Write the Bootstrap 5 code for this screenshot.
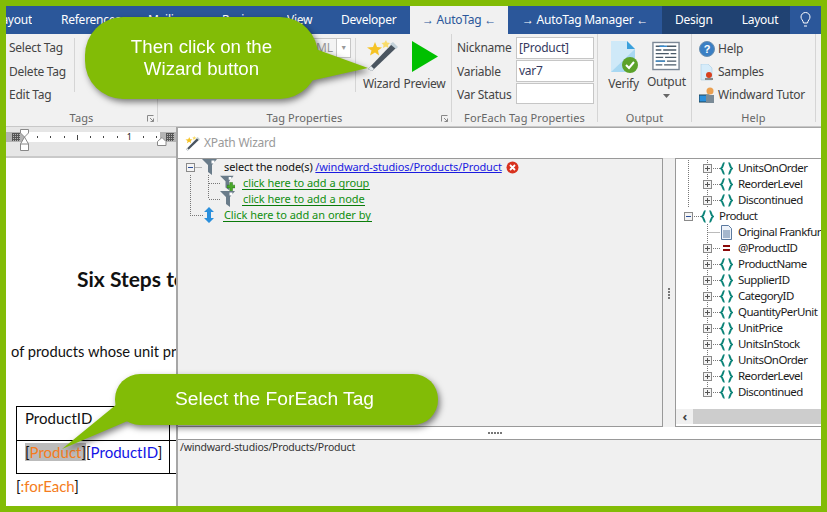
<!doctype html>
<html lang="en"><head><meta charset="utf-8"><title>XPath Wizard</title>
<link href="https://cdn.jsdelivr.net/npm/bootstrap@5.3.0/dist/css/bootstrap.min.css" rel="stylesheet">
<style>
html,body{margin:0;height:512px;overflow:hidden;background:#82bc06}
body{font:12px/16px "Noto Sans",sans-serif;color:#444;letter-spacing:-.25px}
.frm{width:815px;height:500px;margin:6px;background:#fff;position:relative;overflow:hidden}
.tabsbar{height:28px;background:#2b579a;color:#fff;font-size:12px;line-height:28px}
.tabsbar>div{white-space:nowrap;overflow:hidden;flex:none}
.t1{width:26px;display:flex;justify-content:flex-end}
.t2{margin-left:29px;width:87px}.t3{width:74px}.t4{width:65px}.t5{width:54px}.t6{width:69px}
.t7{width:98px;background:#f1f1f1;color:#2b579a;text-align:center}
.t8{width:154px;text-align:center}
.t9{width:128px;background:#204272;display:flex;padding-left:13px;gap:29px}
.t10{width:31px;text-align:center}
.rib{height:93px;background:#f1f1f1;border-bottom:1px solid #c8c8c8}
.grp{border-right:1px solid #d5d5d5;height:88px;flex:none;position:relative;display:flex;flex-direction:column}
.g1{width:152px}.g2{width:294px}.g3{width:146px}.g4{width:94px}.g5{width:124px}
.gbody{flex:1;display:flex;min-height:0}
.glab{height:18px;line-height:28px;text-align:center;font-size:11px;color:#666;letter-spacing:.1px}
.laun{position:absolute;right:3px;bottom:0}
.stk{display:flex;flex-direction:column;gap:7.500px}
.stk div{height:16px;white-space:nowrap}
.tagcol{width:69px;padding-left:3px;margin-top:4px;padding-top:2px;height:54px;border-right:1px solid #d5d5d5}
.sp197{width:197px;flex:none;display:flex;padding-right:4px}
.combo{margin:4px 0 0 auto;width:42px;height:20px;border:1px solid #c6c6c6;background:#f4f4f4;display:flex;justify-content:space-between;color:#999;line-height:18px;padding-left:6px}
.combo i{width:14px;border-left:1px solid #c6c6c6;background:#fff;font-style:normal;font-size:7px;text-align:center}
.tpl{width:52px;border-left:1px solid #d5d5d5;height:54px;margin-top:4px;text-align:center;flex:none;padding-top:2px}
.tpr{width:45px;margin-left:-5px;padding-top:7px;text-align:center;flex:none}
.tpr svg{margin-bottom:4px}
.fl{width:64px;padding:6px 0 0 5px;display:flex;flex-direction:column;gap:7.500px;flex:none}
.fl div{height:16px;white-space:nowrap}
.ff{width:78px;display:flex;flex-direction:column;gap:1px;padding-top:3px;flex:none}
.ff div{height:22px;background:#fff;border:1px solid #c6c6c6;line-height:20px;padding-left:2px;color:#353a60}
.ob{width:51px;flex:none;text-align:center;padding-top:7px}
.ob svg{display:block;margin:0 auto 3px}
.ob2{width:38px;margin-left:-2px}
.hp{padding:7px 0 0 7px;display:flex;flex-direction:column;gap:7px}
.hp div{height:16px;display:flex;align-items:center;gap:3px;white-space:nowrap}
.ruler{height:31px;background:#e6e6e6;border-bottom:2px solid #c9c9c9;position:relative}
.rwrap{padding-top:5px;height:15px;display:flex}
.rl{width:19px;height:10px;background:#b4b4b4;padding:1px 5px 1px 6px}
.rm{width:135px;height:10px;background:#fff;font-size:9px;line-height:10px;color:#222;display:flex;padding-left:12px;align-items:center}
.rm span{width:13.250px;flex:none}
.rm span::before{content:"";display:block;width:1px;height:2px;background:#444}
.rm .tkl::before{height:5px}
.rm .tkn::before{display:none}
.rm .tkn{margin-left:-3px;margin-right:3px}
.rr{flex:1;height:10px;background:#b4b4b4;padding:1px 0 1px 6px}
.hatch{display:block;width:8px;height:8px;background:repeating-linear-gradient(90deg,#555 0 1px,transparent 1px 2px),repeating-linear-gradient(#555 0 1px,transparent 1px 2px)}
.mk1{position:absolute;left:14px;top:2px}.mk2{position:absolute;left:151px;top:10px}
.page{height:348px;font-family:Lato,sans-serif;font-size:15px;color:#111;overflow:hidden;letter-spacing:0}
.hd{font-size:21px;font-weight:700;padding:109px 0 0 71px;line-height:24px;white-space:nowrap}
.ln{padding:50px 0 0 5px;white-space:nowrap;line-height:20px;font-size:14.700px}
.tbl{margin:45px 0 0 10px;width:160px;border-top:1px solid #000;border-left:1px solid #000}
.rwx{border-bottom:1px solid #000;height:34px;line-height:20px}
.rwx2{height:33px;border-bottom:1px solid #000;line-height:20px}
.clx{width:153px;height:100%;border-right:1px solid #000;padding:1px 8px;white-space:nowrap}
.org{color:#f47c20}.blu{color:#1414e6}.sel{background:#bbb}
.endt{padding:2px 0 0 10px;line-height:20px}
.wiz{position:absolute;left:170px;top:121px;width:645px;height:379px;background:#fff;border:1px solid #a6a6a6;border-left-width:2px;border-right:0;border-bottom:0}
.wt{height:30px;display:flex;align-items:center;gap:4px;padding-left:7px;color:#9a9a9a;font-size:12px}
.wmain{height:269px;display:flex}
.lp{width:485px;flex:none;background:#f0f0f0;border:1px solid #999;border-left:0;font-size:11px;color:#111;letter-spacing:-.12px}
.spl{width:12px;flex:none;background:#f0f0f0;border-top:1px solid #e0e0e0;display:flex;flex-direction:column;align-items:center;justify-content:center;gap:1px}
.spl i{width:2px;height:2px;background:#777;display:block}
.rp{flex:1;background:#fff;border:1px solid #999;border-right:0;display:flex;flex-direction:column;overflow:hidden;color:#1c1c1c;font-size:11.500px;letter-spacing:-.55px;min-width:0}
.ttree{flex:1;padding-top:1px}
.row16{height:16px;display:flex;align-items:center;white-space:nowrap}
.row16>*{flex:none}
.vg{height:16px;background:repeating-linear-gradient(#777 0 1px,transparent 1px 2px) left/1px 100% no-repeat}
.hg{height:16px;background:linear-gradient(90deg,#777 50%,transparent 50%) center/2px 1px repeat-x}
.vmid{height:16px;width:9px;display:flex;align-items:center;background:repeating-linear-gradient(#777 0 1px,transparent 1px 2px) center/1px 100% no-repeat}
.vtop{background:repeating-linear-gradient(#777 0 1px,transparent 1px 2px) center top/1px 8px no-repeat}
.w12{width:12px}.w15{width:15px}.w8{width:8px}.w7{width:7px}.w13{width:13px}.w31{width:31px}.w18{width:18px}.w9{width:9px}
.hl{background:linear-gradient(90deg,#777 50%,transparent 50%) center/2px 1px repeat-x,repeating-linear-gradient(#777 0 1px,transparent 1px 2px) left/1px 100% no-repeat;height:16px}
.hlend{background:linear-gradient(90deg,#777 50%,transparent 50%) center/2px 1px repeat-x,repeating-linear-gradient(#777 0 1px,transparent 1px 2px) left top/1px 8px no-repeat;height:16px}
.hl12{width:12px}.hl14{width:14px}.hl13{width:13px}
.ic{margin-right:5px}
.sb{height:15px;display:flex;flex:none;background:#cdcdcd;margin-bottom:2px}
.sb b{width:17px;background:#f0f0f0;color:#444;text-align:center;line-height:14px;font-size:13px}
.grn{color:#118f11;border-bottom:1px solid #0a7a0a;line-height:13px;padding:0 1px;word-spacing:.3px}
.bl{color:#1a1ae0;text-decoration:underline}
.strip{height:13px;background:#fff;border-bottom:1px solid #999;display:flex;justify-content:center;align-items:center;gap:1px;padding-right:10px}
.strip i{width:2px;height:2px;background:#777;display:block}
.wb{height:66px;background:#f0f0f0;font-size:10.500px;color:#333;padding-left:2px;line-height:14px;letter-spacing:-.2px}
.addw{display:flex;align-items:flex-end;width:15px}.addp{margin-left:-7px}
.call{position:absolute;background:#82bc06;color:#fff;font:18.700px/22px "Liberation Sans",sans-serif;letter-spacing:0;text-align:center;filter:drop-shadow(2px 3px 3px rgba(0,0,0,.5))}
.c1{left:79px;top:11px;width:233px;height:82px;border-radius:38px;display:flex;align-items:center;justify-content:center}
.c2{left:109px;top:368px;width:323px;height:51px;border-radius:25px;line-height:50px;font-size:19.200px;padding-right:4px}
.tail{position:absolute;overflow:visible}
.tl1{left:225px;top:0}.tl2{left:-70px;top:0}
</style></head><body>
<svg width="0" height="0" class="d-block position-absolute"><defs>
<symbol id="plus" viewBox="0 0 9 9"><rect x=".5" y=".5" width="8" height="8" fill="#f4f4f4" stroke="#8a8a8a"/><path d="M2 4.500h5M4.500 2v5" stroke="#555"/></symbol>
<symbol id="minus" viewBox="0 0 9 9"><rect x=".5" y=".5" width="8" height="8" fill="#f4f4f4" stroke="#8a8a8a"/><path d="M2 4.500h5" stroke="#2b4f9a"/></symbol>
<symbol id="brace" viewBox="0 0 13 13"><path d="M4.500 1C2.500 1 3.500 5 1 6.500 3.500 8 2.500 12 4.500 12M8.500 1c2 0 1 4 3.500 5.500C9.500 8 10.500 12 8.500 12" fill="none" stroke="#0d8479" stroke-width="2"/></symbol>
<symbol id="funnel" viewBox="0 0 15 16"><path d="M0 0h15L10 6v10L6 13V6z" fill="#6a7c8a"/><path d="M9.500 1.500h3v3h-3z" fill="#fff"/></symbol>
<symbol id="wand" viewBox="0 0 32 32"><path d="M2 29L6 31 30 8 26 4z" fill="#4a5560"/><path d="M2 29l3-3 3 3-2 2z" fill="#e8eef2"/><path d="M24 4l6 5 2-2-5-5z" fill="#c4d2da"/><path d="M9 2l2 5 5 .5-4 3 1 5-4-3-5 3 1.500-5L1 7.500 7 7z" fill="#f6c325"/><path d="M20 0l1 2.500 3 .5-2 2 .5 3-2.500-1.500L17 8l.5-3-2-2 3-.5z" fill="#f9dc6a"/></symbol>
<symbol id="laun" viewBox="0 0 7 7"><path d="M.5 6.500v-6h6M3 3l3.500 3.500M6.500 3.500v3h-3" fill="none" stroke="#888"/></symbol>
</defs></svg>
<div class="frm">
<div class="tabsbar d-flex">
<div class="t1"><span>Layout</span></div><div class="t2">References</div><div class="t3">Mailings</div><div class="t4">Review</div><div class="t5">View</div><div class="t6">Developer</div>
<div class="t7">→ AutoTag ←</div><div class="t8">→ AutoTag Manager ←</div><div class="t9"><span>Design</span><span>Layout</span></div>
<div class="t10"><svg width="11" height="17" viewBox="0 0 11 17"><path d="M3.500 11C3 8 1 7.500 1 5a4.500 4.500 0 0 1 9 0c0 2.500-2 3-2.500 6zM4 14h3" fill="none" stroke="#fff"/></svg></div>
</div>
<div class="rib d-flex">
<div class="grp g1"><div class="gbody"><div class="stk tagcol"><div>Select Tag</div><div>Delete Tag</div><div>Edit Tag</div></div></div><div class="glab">Tags</div>
<svg class="laun" width="7" height="7"><use href="#laun"/></svg></div>
<div class="grp g2"><div class="gbody"><div class="sp197"><div class="combo"><span>ML</span><i>▼</i></div></div><div class="tpl"><svg width="32" height="32"><use href="#wand"/></svg><div class="pt-1">Wizard</div></div><div class="tpr"><svg width="26" height="31" viewBox="0 0 26 31" class="d-block mx-auto"><path d="M0 0l26 15.500L0 31z" fill="#00c000"/></svg><div>Preview</div></div></div><div class="glab">Tag Properties</div>
<svg class="laun" width="7" height="7"><use href="#laun"/></svg></div>
<div class="grp g3"><div class="gbody"><div class="fl"><div>Nickname</div><div>Variable</div><div>Var Status</div></div><div class="ff"><div>[Product]</div><div>var7</div><div></div></div></div><div class="glab">ForEach Tag Properties</div></div>
<div class="grp g4"><div class="gbody"><div class="ob"><svg width="30" height="32" viewBox="0 0 30 32"><path d="M2 0h16l8 8v23H2z" fill="#cfe9f8"/><path d="M18 0l8 8h-8z" fill="#3aa0dc"/><path d="M2 31L26 8v23z" fill="#a8d8f2"/><circle cx="21" cy="24" r="8" fill="#5ca22a"/><path d="M17 24l3 3 5-6" fill="none" stroke="#fff" stroke-width="2"/></svg><div>Verify</div></div><div class="ob ob2"><svg width="28" height="30" viewBox="0 0 30 31"><rect x="1" y="1" width="28" height="29" fill="#fff" stroke="#7c8896" stroke-width="1.500"/><path d="M4 5h9M16 5h10M4 9h6M12 9h14M4 13h14M20 13h6M4 17h8M14 17h12M4 21h10M16 21h10M4 25h7M13 25h13" stroke="#4a5a68" stroke-width="1.500"/><path d="M8 5h8M4 21h10" stroke="#3a8dd0" stroke-width="1.500"/></svg><div>Output</div><svg width="7" height="4" class="mt-1"><path d="M0 0h7L3.500 4z" fill="#666"/></svg></div></div><div class="glab">Output</div></div>
<div class="grp g5"><div class="gbody"><div class="hp">
<div><svg width="16" height="16" viewBox="0 0 16 16"><circle cx="8" cy="8" r="7.500" fill="#3a7fc4" stroke="#6a8fb0"/><text x="8" y="12" text-anchor="middle" font-size="11" font-weight="700" fill="#fff" font-family="Liberation Sans">?</text></svg>Help</div>
<div><svg width="16" height="17" viewBox="0 0 16 17"><path d="M2 0h7l4 4v12H2z" fill="#d6ecfa" stroke="#9ec4dc" stroke-width=".5"/><circle cx="10" cy="11" r="3" fill="#d8401e"/><rect x="6" y="14" width="8" height="2" fill="#888"/></svg>Samples</div>
<div><svg width="16" height="17" viewBox="0 0 16 17"><rect y="8" width="10" height="7" fill="#2a8fdc" stroke="#245"/><circle cx="11" cy="4" r="3.500" fill="#eba050"/><path d="M7 8h8v8H7z" fill="#7a8a96"/></svg>Windward Tutor</div>
</div></div><div class="glab">Help</div></div>
</div>
<div class="ruler"><div class="rwrap"><div class="rl"><i class="hatch"></i></div><div class="rm"><span></span><span></span><span></span><span class="tkl"></span><span></span><span></span><span></span><span class="tkn">1</span><span></span><span></span></div><div class="rr"><i class="hatch"></i></div></div>
<svg class="mk1" width="9" height="22" viewBox="0 0 9 22"><path d="M.5.500h8V4L4.500 8 .5 4zM.5 15l4-7 4 7v6.500h-8z" fill="#fff" stroke="#888"/><path d="M.5 15h8" stroke="#888"/></svg>
<svg class="mk2" width="10" height="9" viewBox="0 0 10 9"><path d="M.5 4.500L5 .5l4 4V8.500H.5z" fill="#fff" stroke="#888"/></svg>
</div>
<div class="page">
<div class="hd">Six Steps to Generate a Report</div>
<div class="ln">of products whose unit price is above average</div>
<div class="tbl"><div class="rwx"><div class="clx">ProductID</div></div><div class="rwx2"><div class="clx"><span class="sel">[<span class="org">Product</span>]</span>[<span class="blu">ProductID</span>]</div></div></div>
<div class="endt">[<span class="org">:forEach</span>]</div>
</div>
<div class="wiz">
<div class="wt"><svg width="15" height="15"><use href="#wand"/></svg>XPath Wizard</div>
<div class="wmain">
<div class="lp">
<div class="row16"><span class="w8"></span><svg width="9" height="9"><use href="#minus"/></svg><span class="hg w7"></span><svg width="15" height="16"><use href="#funnel"/></svg><span class="w7"></span><span>select the node(s)</span>&nbsp;<span class="bl">/windward-studios/Products/Product</span><svg width="13" height="13" viewBox="0 0 13 13" class="ms-1"><circle cx="6.500" cy="6.500" r="6" fill="#d8321e"/><path d="M4 4l5 5M9 4l-5 5" stroke="#fff" stroke-width="1.800"/></svg></div>
<div class="row16"><span class="w12"></span><span class="vg w18"></span><span class="hl hl12"></span><span class="addw"><svg width="15" height="16"><use href="#funnel"/></svg><svg width="9" height="9" viewBox="0 0 9 9" class="addp"><path d="M3 0h3v3h3v3H6v3H3V6H0V3h3z" fill="#4aa82a" stroke="#1d6a10" stroke-width=".5"/></svg></span><span class="w7"></span><span class="grn">click here to add a group</span></div>
<div class="row16"><span class="w12"></span><span class="vg w18"></span><span class="hlend hl12"></span><svg width="15" height="16"><use href="#funnel"/></svg><span class="w7"></span><span class="grn">click here to add a node</span></div>
<div class="row16"><span class="w12"></span><span class="hlend hl14"></span><svg width="10" height="16" viewBox="0 0 10 16"><path d="M5 0l5 5H7v6h3l-5 5-5-5h3V5H0z" fill="#2a8fdc"/></svg><span class="w9"></span><span class="grn">Click here to add an order by</span></div>
</div>
<div class="spl"><i></i><i></i><i></i><i></i></div>
<div class="rp"><div class="ttree" id="tree"></div><div class="sb"><b>‹</b></div></div>
</div>
<div class="strip"><i></i><i></i><i></i><i></i><i></i></div>
<div class="wb">/windward-studios/Products/Product</div>
</div>
<div class="call c1">Then click on the<br>Wizard button
<svg class="tail tl1" width="60" height="70" viewBox="0 0 60 70"><path d="M0 30L58 51 0 64z" fill="#82bc06"/></svg></div>
<div class="call c2">Select the ForEach Tag
<svg class="tail tl2" width="90" height="80" viewBox="0 0 90 80"><path d="M72 30L17 75 85 46z" fill="#82bc06"/></svg></div>
</div>
<script>
const rows=[[2,'b','UnitsOnOrder'],[2,'b','ReorderLevel'],[2,'b','Discontinued'],[1,'b','Product'],[0,'d','Original Frankfurt'],[0,'e','@ProductID'],
[0,'b','ProductName'],[0,'b','SupplierID'],[0,'b','CategoryID'],[0,'b','QuantityPerUnit'],[0,'b','UnitPrice'],[0,'b','UnitsInStock'],[0,'b','UnitsOnOrder'],[0,'b','ReorderLevel'],[0,'b','Discontinued']];
const brace='<svg width="13" height="13" class="ic"><use href="#brace"/></svg>';
const plus=(end)=>`<span class="vmid${end?' vtop':''}"><svg width="9" height="9" class="d-block"><use href="#plus"/></svg></span><span class="hg w8"></span>`;
document.getElementById('tree').innerHTML=rows.map(([l,k,t],i)=>{
 if(k==='d')return `<div class="row16"><span class="w31"></span><span class="hl hl13"></span><svg width="13" height="15" viewBox="0 0 13 15" class="ic"><path d="M1.500.5h7l3 3v11h-10zM3 6h7M3 8h7M3 10h7M3 12h7" fill="#eef3fa" stroke="#5c7aa0"/></svg><span>${t}</span></div>`;
 if(l===1)return `<div class="row16"><span class="w8"></span><svg width="9" height="9"><use href="#minus"/></svg><span class="hg w8"></span>${brace}<span>${t}</span></div>`;
 const g=l===2?'<span class="w12"></span><span class="vg w15"></span>':'<span class="w12"></span><span class="w15"></span>';
 const ic=k==='e'?'<svg width="13" height="13" viewBox="0 0 13 13" class="ic"><path d="M3 3h7v2H3zM3 7h7v2H3z" fill="#8a0a0a"/></svg>':brace;
 return `<div class="row16">${g}${plus(i===rows.length-1)}${ic}<span>${t}</span></div>`;
}).join('');
</script>
</body></html>
